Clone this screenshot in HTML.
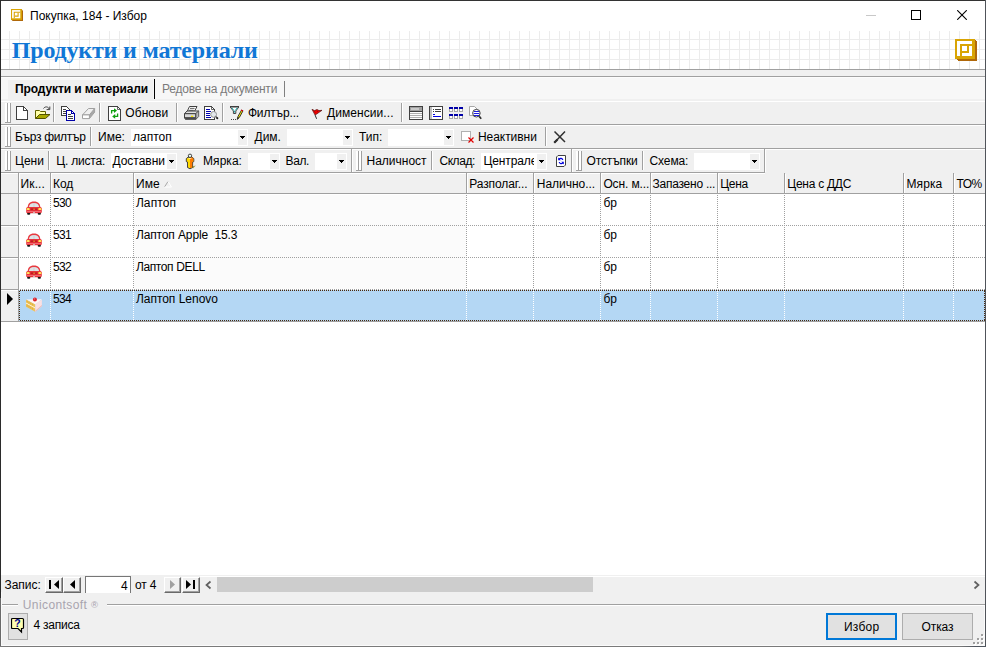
<!DOCTYPE html>
<html>
<head>
<meta charset="utf-8">
<style>
*{box-sizing:border-box;margin:0;padding:0}
html,body{width:986px;height:647px;overflow:hidden;background:#f0f0f0}
body{font-family:"Liberation Sans",sans-serif;font-size:12px;color:#000;position:relative}
.a{position:absolute}
.t{position:absolute;white-space:nowrap;line-height:14px;height:14px}
.hl{position:absolute;height:1px;left:1px;right:1px}
.vl{position:absolute;width:1px}
.sep{position:absolute;width:2px;background:linear-gradient(90deg,#a0a0a0 50%,#fff 50%)}
.grip{position:absolute;left:5px;width:6px;height:20px;background:linear-gradient(90deg,#fff 0,#fff 2px,#a0a0a0 2px,#a0a0a0 3px,#fff 3px,#fff 5px,#a0a0a0 5px,#a0a0a0 6px);border-bottom:1px solid #a0a0a0}
.box{position:absolute;background:#fff;height:17px}
.arr{position:absolute;width:0;height:0;border-left:3px solid transparent;border-right:3px solid transparent;border-top:3px solid #000}
.hc{position:absolute;top:173px;height:20px;border-left:1px solid #a0a0a0}
.vd{position:absolute;top:193px;height:128px;width:1px;background-image:linear-gradient(#a0a0a0 50%,transparent 50%);background-size:1px 2px}
.hd{position:absolute;left:18px;right:1px;height:1px;background-image:linear-gradient(90deg,#a0a0a0 50%,transparent 50%);background-size:2px 1px}
</style>
</head>
<body>
<!-- window frame -->
<!-- title bar -->
<div class="a" id="titlebar" style="left:1px;top:1px;width:984px;height:30px;background:#fff"></div>
<!-- header band -->
<div class="a" id="band" style="left:1px;top:31px;width:984px;height:38px;background-color:#fff;background-image:linear-gradient(90deg,#ececec 1px,transparent 1px),linear-gradient(#ececec 1px,transparent 1px);background-size:10px 10px;background-position:8px 8px"></div>

<!-- title icon -->
<svg class="a" style="left:11px;top:9px" width="12" height="12" viewBox="0 0 22 22">
<path d="M0 0H19L22 3V22H3L0 19Z" fill="#b0680a"/>
<rect x="0" y="0" width="20" height="20" fill="#d9a404"/>
<rect x="2" y="2" width="15" height="15" fill="#fff"/>
<path d="M5 5H17V7H7V17H5Z" fill="#d9a404"/>
<path d="M12 7H14V14H7V12H12Z" fill="#d9a404"/>
</svg>
<div class="t" id="title" style="left:30px;top:9px">Покупка, 184 - Избор</div>
<!-- window controls -->
<div class="a" style="left:866px;top:15px;width:10px;height:1px;background:#c8c8c8"></div>
<div class="a" style="left:911px;top:10px;width:10px;height:10px;border:1px solid #000"></div>
<svg class="a" style="left:957px;top:10px" width="10" height="10" viewBox="0 0 10 10"><path d="M0.2 0.2L9.8 9.8M9.8 0.2L0.2 9.8" stroke="#000" stroke-width="1.1" fill="none"/></svg>
<!-- heading -->
<div class="a" id="heading" style="left:11.8px;top:35px;font-family:'Liberation Serif',serif;font-weight:bold;font-size:24px;letter-spacing:-0.18px;line-height:30px;color:#1077d6;white-space:nowrap">Продукти и материали</div>
<!-- logo -->
<svg class="a" style="left:955px;top:39px" width="22" height="22" viewBox="0 0 22 22" shape-rendering="crispEdges">
<path d="M0 0H19L22 3V22H3L0 19Z" fill="#b0680a"/>
<rect x="0" y="0" width="20" height="20" fill="#d9a404"/>
<rect x="2" y="2" width="15" height="15" fill="#fff"/>
<path d="M5 5H17V7H7V17H5Z" fill="#d9a404"/>
<path d="M12 7H14V14H7V12H12Z" fill="#d9a404"/>
</svg>
<!-- lines under band -->
<div class="hl" style="top:69px;background:#a0a0a0"></div>
<div class="hl" style="top:76px;background:#a0a0a0"></div>
<!-- tab strip -->
<div class="a" style="left:1px;top:77px;width:984px;height:22px;background:#f7f7f7"></div>
<div class="a" style="left:8px;top:80px;width:145px;height:19px;background:#f0f0f0"></div>
<div class="hl" style="top:77px;background:#fcfcfc"></div>
<div class="t" id="tab1" style="left:15px;top:82px;font-weight:bold;letter-spacing:-0.11px">Продукти и материали</div>
<div class="a" style="left:154px;top:79px;width:1px;height:20px;background:#000"></div>
<div class="t" id="tab2" style="left:162px;top:82px;color:#7a7a7a;letter-spacing:-0.21px">Редове на документи</div>
<div class="a" style="left:284px;top:81px;width:1px;height:16px;background:#808080"></div>
<div class="hl" style="top:101px;background:#fff"></div>

<!-- toolbar 1 -->
<div class="grip" style="top:103px"></div>
<!-- new -->
<svg class="a" style="left:16px;top:106px" width="12" height="14" viewBox="0 0 12 14" shape-rendering="crispEdges">
<path d="M0.5 0.5H7.5L11.5 4.5V13.5H0.5Z" fill="#fff" stroke="#404040"/>
<path d="M7.5 0.5V4.5H11.5" fill="none" stroke="#404040"/>
</svg>
<!-- open -->
<svg class="a" style="left:35px;top:105px" width="16" height="15" viewBox="0 0 16 15">
<path d="M0.5 13.5V5.5H4.5L5.5 6.5H10.5V9" fill="#ffffa8" stroke="#606000" stroke-width="1"/>
<path d="M0.5 13.5L4.5 9.5H15L10.5 13.5Z" fill="#a8a800" stroke="#505000" stroke-width="1"/>
<path d="M8.5 3.5C10 1.3 13 1.3 14.3 4" fill="none" stroke="#404040" stroke-width="1"/>
<path d="M14.8 1.5V4.6H11.6" fill="none" stroke="#404040" stroke-width="1"/>
</svg>
<div class="sep" style="left:53px;top:103px;height:19px"></div>
<!-- copy -->
<svg class="a" style="left:61px;top:106px" width="15" height="15" viewBox="0 0 15 15" shape-rendering="crispEdges">
<path d="M0.5 0.5H5.5L8.5 3.5V9.5H0.5Z" fill="#fff" stroke="#404040"/>
<path d="M2 3.5H5M2 5.5H7M2 7.5H7" stroke="#404040"/>
<path d="M5.5 4.5H10.5L13.5 7.5V14.5H5.5Z" fill="#fff" stroke="#0000a8"/>
<path d="M10.5 4.5V7.5H13.5" fill="none" stroke="#0000a8"/>
<path d="M7 8.5H10M7 10.5H12M7 12.5H12" stroke="#404040"/>
</svg>
<!-- eraser (disabled) -->
<svg class="a" style="left:82px;top:108px" width="14" height="12" viewBox="0 0 14 12">
<path d="M7.4 6.9L12.6 0.5V4.2L7.4 10.6Z" fill="#a8a8a8" stroke="#a0a0a0" stroke-width="1"/>
<path d="M0.5 6.9L6.5 0.5H12.6L7.4 6.9Z" fill="#f0f0f0" stroke="#a0a0a0" stroke-width="1"/>
<path d="M0.5 6.9H7.4V10.6H0.5Z" fill="#fff" stroke="#a0a0a0" stroke-width="1"/>
</svg>
<div class="sep" style="left:99px;top:103px;height:19px"></div>
<!-- refresh -->
<svg class="a" style="left:108px;top:106px" width="13" height="15" viewBox="0 0 13 15">
<path d="M0.5 0.5H9.5L12.5 3.5V14.5H0.5Z" fill="#fff" stroke="#404040" shape-rendering="crispEdges"/>
<path d="M9.5 0.5V3.5H12.5" fill="none" stroke="#404040" stroke-width="0.8"/>
<path d="M3.6 7.6V4.6H6.5" fill="none" stroke="#10a010" stroke-width="1.3"/>
<path d="M6 2.2L9 4.6L6 7Z" fill="#10a010"/>
<path d="M9.6 7.4V10.4H6.7" fill="none" stroke="#10a010" stroke-width="1.3"/>
<path d="M7.2 8L4.2 10.4L7.2 12.8Z" fill="#10a010"/>
</svg>
<div class="t" id="b_obn" style="left:125.3px;top:106px;letter-spacing:0.07px">Обнови</div>
<div class="sep" style="left:176px;top:103px;height:19px"></div>
<!-- print -->
<svg class="a" style="left:184px;top:106px" width="16" height="14" viewBox="0 0 16 14">
<path d="M3.3 5.2L5.5 0.5H13L10.6 5.2Z" fill="#fff" stroke="#404040"/>
<path d="M6 2.4H10.6M5.2 4.3H9.6" stroke="#505050" stroke-width="0.9"/>
<path d="M0.5 7.7L3 5H14.6L12 7.7Z" fill="#e0e0e0" stroke="#404040"/>
<path d="M11.7 7.7L14.7 4.8V10.5L11.7 13.5Z" fill="#b8b8b8" stroke="#505050" stroke-width="0.9"/>
<path d="M0.5 7.7H11.7V12.3H0.5Z" fill="#d8d8d8" stroke="#404040"/>
<path d="M1.5 12.5H11.7V13.6H1.5Z" fill="#e8e8e8" stroke="#404040" stroke-width="0.9"/>
<path d="M1 11.6H11.4" stroke="#404040" stroke-width="0.9"/>
<rect x="7" y="9.7" width="2.2" height="1.3" fill="#f0e000"/>
</svg>
<!-- preview -->
<svg class="a" style="left:204px;top:106px" width="15" height="15" viewBox="0 0 15 15">
<path d="M0.5 0.5H7.5L10.5 3.5V13.5H0.5Z" fill="#fff" stroke="#404040" shape-rendering="crispEdges"/>
<path d="M7.5 0.5V3.5H10.5" fill="none" stroke="#404040" stroke-width="0.8"/>
<path d="M2 3.5H6M2 5.5H7M2 7.5H6M2 9.5H6M2 11.5H7" stroke="#0000b0" shape-rendering="crispEdges"/>
<circle cx="9.6" cy="8.4" r="2.9" fill="#e4e8ec" stroke="#909090"/>
<path d="M11.6 10.4L13.4 12.2" stroke="#505050" stroke-width="1.4"/>
<circle cx="13.3" cy="12.2" r="1" fill="#202020"/>
</svg>
<div class="sep" style="left:222px;top:103px;height:19px"></div>
<!-- filter -->
<svg class="a" style="left:229px;top:105px" width="16" height="16" viewBox="0 0 16 16">
<path d="M1 1.5H10" stroke="#404040" stroke-width="1"/>
<path d="M1.2 2L4.4 6V8.5H6.8V6L9.8 2Z" fill="#fff" stroke="#404040" stroke-width="1"/>
<path d="M2.8 2.8L5 5.6M8.2 2.8L6.2 5.6M5.5 6V7.6" stroke="#20b0b0" stroke-width="1" fill="none"/>
<path d="M8.2 14.4L9 11.4L12.6 5L14 5.8L10.4 12.4Z" fill="#fff000" stroke="#202020" stroke-width="0.9"/>
<path d="M12.4 4.4L14.2 5.4L13.6 6.4L11.8 5.4Z" fill="#e00010"/>
<path d="M8.2 14.6L8.9 12L10.2 12.8Z" fill="#202020"/>
<path d="M2 14.5H3M4 14.5H5M6 14.5H7" stroke="#404040" shape-rendering="crispEdges"/>
</svg>
<div class="t" id="b_fil" style="left:247.9px;top:106px;letter-spacing:-0.15px">Филтър...</div>
<!-- flag -->
<svg class="a" style="left:311px;top:108px" width="13" height="12" viewBox="0 0 13 12">
<path d="M1 1.3L3.5 2.6L6 1.5L8 2.6L11 2.3L4.1 7.1Z" fill="#f00000" stroke="#501010" stroke-width="0.7"/>
<path d="M4.1 7.1L5.6 10.8" fill="none" stroke="#303030" stroke-width="1"/>
<path d="M3.4 3.4L4.4 4.4M6 3L6.8 4" stroke="#800000" stroke-width="0.6"/>
</svg>
<div class="t" id="b_dim" style="left:327.0px;top:106px;letter-spacing:0.07px">Дименсии...</div>
<div class="sep" style="left:401px;top:103px;height:19px"></div>
<!-- view icons -->
<svg class="a" style="left:409px;top:106px" width="14" height="14" viewBox="0 0 14 14" shape-rendering="crispEdges">
<rect x="0.5" y="0.5" width="13" height="13" fill="#fff" stroke="#404040"/>
<rect x="1" y="1" width="12" height="4" fill="#a0a0a0"/>
<rect x="2" y="2" width="8" height="2" fill="#c8c8c8"/>
<path d="M0 5.5H14" stroke="#404040"/>
<path d="M1 7.5H13M1 9.5H13M1 11.5H13" stroke="#b0b0b0"/>
</svg>
<svg class="a" style="left:429px;top:106px" width="14" height="14" viewBox="0 0 14 14" shape-rendering="crispEdges">
<rect x="0.5" y="0.5" width="13" height="13" fill="#fff" stroke="#404040"/>
<rect x="1" y="1" width="2" height="12" fill="#c0c0c0"/>
<path d="M4 3.5H5M6 3.5H12M4 5.5H5M6 5.5H12" stroke="#404040"/>
<path d="M4 8.5H6M4 10.5H12" stroke="#0000e0"/>
</svg>
<svg class="a" style="left:449px;top:107px" width="14" height="12" viewBox="0 0 14 12" shape-rendering="crispEdges">
<g fill="#fff" stroke="#a8a8a8"><rect x="0.5" y="0.5" width="3" height="4"/><rect x="5.5" y="0.5" width="3" height="4"/><rect x="10.5" y="0.5" width="3" height="4"/><rect x="0.5" y="7.5" width="3" height="4"/><rect x="5.5" y="7.5" width="3" height="4"/><rect x="10.5" y="7.5" width="3" height="4"/></g>
<g fill="#0000a8"><rect x="0" y="0" width="4" height="2"/><rect x="5" y="0" width="4" height="2"/><rect x="10" y="0" width="4" height="2"/><rect x="0" y="7" width="4" height="2"/><rect x="5" y="7" width="4" height="2"/><rect x="10" y="7" width="4" height="2"/></g>
</svg>
<svg class="a" style="left:469px;top:106px" width="14" height="15" viewBox="0 0 14 15">
<path d="M0.5 0.5H5.5L8 3V9.5H0.5Z" fill="#fff" stroke="#a8a8a8"/>
<circle cx="7.4" cy="7.2" r="3.8" fill="#fff" stroke="#404040"/>
<path d="M5 5.5H10M4.6 7.5H10.4M5 9.5H10" stroke="#0000e0" stroke-width="0.9"/>
<path d="M10.2 10.4L12.2 12.8" stroke="#303030" stroke-width="1.7"/>
</svg>
<div class="hl" style="top:124px;background:#a0a0a0"></div>
<div class="hl" style="top:125px;background:#fff"></div>

<!-- toolbar 2 -->
<div class="grip" style="top:127px"></div>
<div class="a" style="left:131px;top:129px;width:117px;height:17px;background:#fff"></div><div class="a" style="left:238px;top:130px;width:9px;height:15px;background:#f0f0f0"></div><svg class="a" style="left:240px;top:136px" width="5" height="3" viewBox="0 0 5 3" shape-rendering="crispEdges"><path d="M0 0H5V1H0ZM1 1H4V2H1ZM2 2H3V3H2Z" fill="#000"/></svg>
<div class="a" style="left:287px;top:129px;width:66px;height:17px;background:#fff"></div><div class="a" style="left:343px;top:130px;width:9px;height:15px;background:#f0f0f0"></div><svg class="a" style="left:345px;top:136px" width="5" height="3" viewBox="0 0 5 3" shape-rendering="crispEdges"><path d="M0 0H5V1H0ZM1 1H4V2H1ZM2 2H3V3H2Z" fill="#000"/></svg>
<div class="a" style="left:388px;top:129px;width:66px;height:17px;background:#fff"></div><div class="a" style="left:444px;top:130px;width:9px;height:15px;background:#f0f0f0"></div><svg class="a" style="left:446px;top:136px" width="5" height="3" viewBox="0 0 5 3" shape-rendering="crispEdges"><path d="M0 0H5V1H0ZM1 1H4V2H1ZM2 2H3V3H2Z" fill="#000"/></svg>
<div class="t" id="l_bf" style="left:14.9px;top:130px;letter-spacing:-0.3px">Бърз филтър</div>
<div class="sep" style="left:90px;top:127px;height:19px"></div>
<div class="t" id="l_ime" style="left:98px;top:130px">Име:</div>
<div class="t" id="v_lap" style="left:133px;top:130px">лаптоп</div>
<div class="t" id="l_dim" style="left:254.5px;top:130px">Дим.</div>
<div class="t" id="l_tip" style="left:359.1px;top:130px;letter-spacing:-0.04px">Тип:</div>
<!-- inactive checkbox icon -->
<svg class="a" style="left:461px;top:131px" width="14" height="13" viewBox="0 0 14 13">
<rect x="0.5" y="0.5" width="9" height="9" fill="#fff" stroke="#b0b0b0" shape-rendering="crispEdges"/>
<path d="M7.5 6.5L12.5 11.5M12.5 6.5L7.5 11.5" stroke="#e00000" stroke-width="1.2" fill="none"/>
</svg>
<div class="t" id="l_neak" style="left:477.9px;top:130px;letter-spacing:-0.04px">Неактивни</div>
<div class="sep" style="left:545px;top:127px;height:19px"></div>
<svg class="a" style="left:553px;top:130px" width="14" height="14" viewBox="0 0 14 14">
<path d="M1.5 1.5L12 12M12 1.5L1.5 12.5" stroke="#303030" stroke-width="1.5" fill="none"/>
<path d="M1.2 12.8L4.5 9.5" stroke="#303030" stroke-width="2.2"/>
</svg>
<div class="hl" style="top:148px;background:#a0a0a0"></div>
<div class="hl" style="top:149px;background:#fff"></div>
<!-- toolbar 3 -->
<div class="grip" style="top:151px"></div>
<div class="a" style="left:111px;top:153px;width:66px;height:17px;background:#fff"></div><div class="a" style="left:167px;top:154px;width:9px;height:15px;background:#f0f0f0"></div><svg class="a" style="left:169px;top:160px" width="5" height="3" viewBox="0 0 5 3" shape-rendering="crispEdges"><path d="M0 0H5V1H0ZM1 1H4V2H1ZM2 2H3V3H2Z" fill="#000"/></svg>
<div class="a" style="left:248px;top:153px;width:32px;height:17px;background:#fff"></div><div class="a" style="left:270px;top:154px;width:9px;height:15px;background:#f0f0f0"></div><svg class="a" style="left:272px;top:160px" width="5" height="3" viewBox="0 0 5 3" shape-rendering="crispEdges"><path d="M0 0H5V1H0ZM1 1H4V2H1ZM2 2H3V3H2Z" fill="#000"/></svg>
<div class="a" style="left:315px;top:153px;width:32px;height:17px;background:#fff"></div><div class="a" style="left:337px;top:154px;width:9px;height:15px;background:#f0f0f0"></div><svg class="a" style="left:339px;top:160px" width="5" height="3" viewBox="0 0 5 3" shape-rendering="crispEdges"><path d="M0 0H5V1H0ZM1 1H4V2H1ZM2 2H3V3H2Z" fill="#000"/></svg>
<div class="a" style="left:481px;top:153px;width:66px;height:17px;background:#fff"></div><div class="a" style="left:537px;top:154px;width:9px;height:15px;background:#f0f0f0"></div><svg class="a" style="left:539px;top:160px" width="5" height="3" viewBox="0 0 5 3" shape-rendering="crispEdges"><path d="M0 0H5V1H0ZM1 1H4V2H1ZM2 2H3V3H2Z" fill="#000"/></svg>
<div class="a" style="left:694px;top:153px;width:66px;height:17px;background:#fff"></div><div class="a" style="left:750px;top:154px;width:9px;height:15px;background:#f0f0f0"></div><svg class="a" style="left:752px;top:160px" width="5" height="3" viewBox="0 0 5 3" shape-rendering="crispEdges"><path d="M0 0H5V1H0ZM1 1H4V2H1ZM2 2H3V3H2Z" fill="#000"/></svg>
<div class="t" id="l_ceni" style="left:15px;top:154px">Цени</div>
<div class="sep" style="left:48px;top:151px;height:19px"></div>
<div class="t" id="l_cl" style="left:56.2px;top:154px;letter-spacing:-0.18px">Ц. листа:</div>
<div class="t" id="v_dost" style="left:112.4px;top:154px;letter-spacing:0.0px">Доставни</div>
<!-- person icon -->
<svg class="a" style="left:185px;top:153px" width="12" height="17" viewBox="0 0 12 17">
<path d="M7 13.6L10.8 12.6L8 15.6Z" fill="#a0a048"/>
<path d="M1.3 5.6L3 4.2H7L8.8 5.6V8.6L7.6 9V14.5L5 15.8L2.5 14.5V9L1.3 8.6Z" fill="#ffd800" stroke="#303038" stroke-width="0.9"/>
<path d="M5 4.2H7L8.4 5.7V8.4L7.2 8.8V14.3L5 15.3Z" fill="#ff7a00"/>
<path d="M3.6 5.2H6.4V5.9H3.6Z" fill="#fff8d0"/>
<circle cx="5" cy="2.8" r="1.7" fill="#f0fff0" stroke="#303038" stroke-width="0.9"/>
</svg>
<div class="t" id="l_mqr" style="left:203.1px;top:154px;letter-spacing:0.03px">Мярка:</div>
<div class="t" id="l_val" style="left:285.6px;top:154px;letter-spacing:-0.41px">Вал.</div>
<div class="a" style="left:351px;top:149px;width:1px;height:23px;background:#a0a0a0"></div>
<div class="a" style="left:352px;top:149px;width:1px;height:23px;background:#fff"></div>
<div class="grip" style="top:151px;left:356px"></div>
<div class="t" id="l_nal" style="left:366.5px;top:154px">Наличност</div>
<div class="sep" style="left:431px;top:151px;height:19px"></div>
<div class="t" id="l_skl" style="left:439.4px;top:154px;letter-spacing:-0.41px">Склад:</div>
<div class="t" id="v_cen" style="left:483.4px;letter-spacing:-0.1px;top:154px;width:51px;overflow:hidden">Централен</div>
<!-- refresh small -->
<svg class="a" style="left:556px;top:155px" width="10" height="12" viewBox="0 0 10 12">
<path d="M0.5 2L2 0.5H9.5V10L8 11.5H0.5Z" fill="#fff" stroke="#404040"/>
<path d="M6.8 5A2 2 0 0 0 3.2 4.2" fill="none" stroke="#0000e0" stroke-width="1.2"/>
<path d="M2.2 2.6V5.2H4.8Z" fill="#0000e0"/>
<path d="M3.2 7A2 2 0 0 0 6.8 7.8" fill="none" stroke="#0000e0" stroke-width="1.2"/>
<path d="M7.8 9.4V6.8H5.2Z" fill="#0000e0"/>
</svg>
<div class="a" style="left:571px;top:149px;width:1px;height:23px;background:#a0a0a0"></div>
<div class="a" style="left:572px;top:149px;width:1px;height:23px;background:#fff"></div>
<div class="grip" style="top:151px;left:576px"></div>
<div class="t" id="l_ots" style="left:586.6px;top:154px;letter-spacing:-0.14px">Отстъпки</div>
<div class="sep" style="left:642px;top:151px;height:19px"></div>
<div class="t" id="l_sch" style="left:649.6px;top:154px;letter-spacing:-0.14px">Схема:</div>
<div class="a" style="left:764px;top:149px;width:1px;height:23px;background:#a0a0a0"></div>
<div class="a" style="left:765px;top:149px;width:1px;height:23px;background:#fff"></div>
<div class="a" style="left:1px;top:172px;width:764px;height:1px;background:#a0a0a0"></div>
<div class="a" style="left:1px;top:173px;width:764px;height:1px;background:#fff"></div>
<!-- grid -->
<div class="a" style="left:1px;top:174px;width:984px;height:402px;background:#fff"></div>
<div class="a" style="left:1px;top:174px;width:984px;height:19px;background:#f0f0f0"></div>
<div class="a" style="left:1px;top:194px;width:17px;height:127px;background:#f0f0f0"></div>
<div class="a" style="left:134px;top:195px;width:332px;height:94px;background:#fbfbfb"></div>
<div class="a" style="left:19px;top:290px;width:966px;height:31px;background:#b4d7f4"></div>
<div class="hl" style="top:193px;background:#a0a0a0"></div>
<div class="a" style="left:18px;top:173px;width:1px;height:149px;background:#a0a0a0"></div>
<div class="a" style="left:1px;top:225px;width:17px;height:1px;background:#a0a0a0"></div>
<div class="a" style="left:1px;top:226px;width:17px;height:1px;background:#fff"></div>
<div class="a" style="left:1px;top:257px;width:17px;height:1px;background:#a0a0a0"></div>
<div class="a" style="left:1px;top:258px;width:17px;height:1px;background:#fff"></div>
<div class="a" style="left:1px;top:289px;width:17px;height:1px;background:#a0a0a0"></div>
<div class="a" style="left:1px;top:290px;width:17px;height:1px;background:#fff"></div>
<div class="a" style="left:1px;top:321px;width:17px;height:1px;background:#a0a0a0"></div>
<div class="a" style="left:50px;top:173px;width:1px;height:20px;background:#a0a0a0"></div>
<div class="a" style="left:51px;top:174px;width:1px;height:19px;background:#fff"></div>
<div class="a" style="left:133px;top:173px;width:1px;height:20px;background:#a0a0a0"></div>
<div class="a" style="left:134px;top:174px;width:1px;height:19px;background:#fff"></div>
<div class="a" style="left:466px;top:173px;width:1px;height:20px;background:#a0a0a0"></div>
<div class="a" style="left:467px;top:174px;width:1px;height:19px;background:#fff"></div>
<div class="a" style="left:533px;top:173px;width:1px;height:20px;background:#a0a0a0"></div>
<div class="a" style="left:534px;top:174px;width:1px;height:19px;background:#fff"></div>
<div class="a" style="left:600px;top:173px;width:1px;height:20px;background:#a0a0a0"></div>
<div class="a" style="left:601px;top:174px;width:1px;height:19px;background:#fff"></div>
<div class="a" style="left:650px;top:173px;width:1px;height:20px;background:#a0a0a0"></div>
<div class="a" style="left:651px;top:174px;width:1px;height:19px;background:#fff"></div>
<div class="a" style="left:717px;top:173px;width:1px;height:20px;background:#a0a0a0"></div>
<div class="a" style="left:718px;top:174px;width:1px;height:19px;background:#fff"></div>
<div class="a" style="left:784px;top:173px;width:1px;height:20px;background:#a0a0a0"></div>
<div class="a" style="left:785px;top:174px;width:1px;height:19px;background:#fff"></div>
<div class="a" style="left:903px;top:173px;width:1px;height:20px;background:#a0a0a0"></div>
<div class="a" style="left:904px;top:174px;width:1px;height:19px;background:#fff"></div>
<div class="a" style="left:953px;top:173px;width:1px;height:20px;background:#a0a0a0"></div>
<div class="a" style="left:954px;top:174px;width:1px;height:19px;background:#fff"></div>
<div class="a" style="left:19px;top:174px;width:1px;height:19px;background:#fff"></div>
<div class="t" id="h0" style="left:20.6px;top:177px;letter-spacing:0.08px">Ик...</div>
<div class="t" id="h1" style="left:53.1px;top:177px;letter-spacing:-0.07px">Код</div>
<div class="t" id="h2" style="left:136.1px;top:177px;letter-spacing:0.01px">Име</div>
<div class="t" id="h3" style="left:469.2px;top:177px;letter-spacing:-0.08px">Разполаг...</div>
<div class="t" id="h4" style="left:536.8px;top:177px;letter-spacing:-0.03px">Налично...</div>
<div class="t" id="h5" style="left:603.4px;top:177px;letter-spacing:-0.11px">Осн. м...</div>
<div class="t" id="h6" style="left:652.6px;top:177px;letter-spacing:-0.26px">Запазено ...</div>
<div class="t" id="h7" style="left:720.3px;top:177px;letter-spacing:-0.32px">Цена</div>
<div class="t" id="h8" style="left:787.3px;top:177px;letter-spacing:-0.27px">Цена с ДДС</div>
<div class="t" id="h9" style="left:906.5px;top:177px;letter-spacing:0.09px">Мярка</div>
<div class="t" id="h10" style="left:956.6px;top:177px;letter-spacing:-0.63px">ТО%</div>
<svg class="a" style="left:164px;top:181px" width="9" height="7" viewBox="0 0 9 7"><path d="M0.5 6L4 0.5" stroke="#a8a8a8" fill="none"/><path d="M4 0.5L7.5 6H0.5" stroke="#fff" fill="none"/></svg>
<div class="hd" style="top:225px"></div>
<div class="hd" style="top:257px"></div>
<div class="hd" style="top:289px"></div>
<div class="a" style="left:19px;top:321px;width:966px;height:1px;background:#a0a0a0"></div>
<div class="vd" style="left:50px;height:96px"></div>
<div class="vd" style="left:50px;top:291px;height:30px;background-image:linear-gradient(#fff 50%,transparent 50%)"></div>
<div class="vd" style="left:133px;height:96px"></div>
<div class="vd" style="left:133px;top:291px;height:30px;background-image:linear-gradient(#fff 50%,transparent 50%)"></div>
<div class="vd" style="left:466px;height:96px"></div>
<div class="vd" style="left:466px;top:291px;height:30px;background-image:linear-gradient(#fff 50%,transparent 50%)"></div>
<div class="vd" style="left:533px;height:96px"></div>
<div class="vd" style="left:533px;top:291px;height:30px;background-image:linear-gradient(#fff 50%,transparent 50%)"></div>
<div class="vd" style="left:600px;height:96px"></div>
<div class="vd" style="left:600px;top:291px;height:30px;background-image:linear-gradient(#fff 50%,transparent 50%)"></div>
<div class="vd" style="left:650px;height:96px"></div>
<div class="vd" style="left:650px;top:291px;height:30px;background-image:linear-gradient(#fff 50%,transparent 50%)"></div>
<div class="vd" style="left:717px;height:96px"></div>
<div class="vd" style="left:717px;top:291px;height:30px;background-image:linear-gradient(#fff 50%,transparent 50%)"></div>
<div class="vd" style="left:784px;height:96px"></div>
<div class="vd" style="left:784px;top:291px;height:30px;background-image:linear-gradient(#fff 50%,transparent 50%)"></div>
<div class="vd" style="left:903px;height:96px"></div>
<div class="vd" style="left:903px;top:291px;height:30px;background-image:linear-gradient(#fff 50%,transparent 50%)"></div>
<div class="vd" style="left:953px;height:96px"></div>
<div class="vd" style="left:953px;top:291px;height:30px;background-image:linear-gradient(#fff 50%,transparent 50%)"></div>
<div class="a" style="left:19px;top:290px;width:966px;height:31px;background:linear-gradient(90deg,#4a280b 50%,transparent 50%) 1px 0/2px 1px repeat-x,linear-gradient(90deg,#4a280b 50%,transparent 50%) 1px 30px/2px 1px repeat-x,linear-gradient(#4a280b 50%,transparent 50%) 0 1px/1px 2px repeat-y,linear-gradient(#4a280b 50%,transparent 50%) 965px 1px/1px 2px repeat-y"></div>
<div class="t" id="c0" style="left:53.1px;top:196px;letter-spacing:-0.75px">530</div>
<div class="t" id="n0" style="left:135.9px;top:196px;white-space:pre;letter-spacing:0.1px">Лаптоп</div>
<div class="t" style="left:603.5px;top:196px">бр</div>
<svg class="a" style="left:26px;top:201px" width="16" height="14" viewBox="0 0 16 14">
<path d="M1.6 7C1.8 3 3.5 0.6 8 0.6S14.2 3 14.4 7Z" fill="#e83a40"/>
<path d="M2.9 6C3.3 3.6 4.8 2 8 2S12.7 3.6 13.1 6Z" fill="#dfe3e6"/>
<path d="M7.6 2V6H8.4V2Z" fill="#c8ccd0"/>
<rect x="0.2" y="6" width="15.6" height="6.3" rx="1.6" fill="#e8343c"/>
<rect x="4.6" y="7.4" width="6.8" height="1.8" fill="#c01820"/>
<rect x="0.5" y="7" width="3.3" height="2.1" rx="0.9" fill="#ffd030"/>
<rect x="12.2" y="7" width="3.3" height="2.1" rx="0.9" fill="#ffd030"/>
<rect x="1.3" y="7.4" width="1.6" height="1.2" rx="0.5" fill="#fff8c0"/>
<rect x="13.1" y="7.4" width="1.6" height="1.2" rx="0.5" fill="#fff8c0"/>
<rect x="7.6" y="7.6" width="0.9" height="1.3" fill="#ffe040"/>
<rect x="1" y="10" width="14" height="0.9" fill="#f47078"/>
<path d="M1.2 12H4.2V13.2Q2.7 14.4 1.2 13.2Z" fill="#181818"/>
<path d="M11.8 12H14.8V13.2Q13.3 14.4 11.8 13.2Z" fill="#181818"/>
<rect x="7.2" y="11" width="1.6" height="2" rx="0.6" fill="#d8dcdc"/>
</svg>
<div class="t" id="c1" style="left:53.1px;top:228px;letter-spacing:-0.75px">531</div>
<div class="t" id="n1" style="left:135.9px;top:228px;white-space:pre;letter-spacing:-0.12px">Лаптоп Apple  15.3</div>
<div class="t" style="left:603.5px;top:228px">бр</div>
<svg class="a" style="left:26px;top:233px" width="16" height="14" viewBox="0 0 16 14">
<path d="M1.6 7C1.8 3 3.5 0.6 8 0.6S14.2 3 14.4 7Z" fill="#e83a40"/>
<path d="M2.9 6C3.3 3.6 4.8 2 8 2S12.7 3.6 13.1 6Z" fill="#dfe3e6"/>
<path d="M7.6 2V6H8.4V2Z" fill="#c8ccd0"/>
<rect x="0.2" y="6" width="15.6" height="6.3" rx="1.6" fill="#e8343c"/>
<rect x="4.6" y="7.4" width="6.8" height="1.8" fill="#c01820"/>
<rect x="0.5" y="7" width="3.3" height="2.1" rx="0.9" fill="#ffd030"/>
<rect x="12.2" y="7" width="3.3" height="2.1" rx="0.9" fill="#ffd030"/>
<rect x="1.3" y="7.4" width="1.6" height="1.2" rx="0.5" fill="#fff8c0"/>
<rect x="13.1" y="7.4" width="1.6" height="1.2" rx="0.5" fill="#fff8c0"/>
<rect x="7.6" y="7.6" width="0.9" height="1.3" fill="#ffe040"/>
<rect x="1" y="10" width="14" height="0.9" fill="#f47078"/>
<path d="M1.2 12H4.2V13.2Q2.7 14.4 1.2 13.2Z" fill="#181818"/>
<path d="M11.8 12H14.8V13.2Q13.3 14.4 11.8 13.2Z" fill="#181818"/>
<rect x="7.2" y="11" width="1.6" height="2" rx="0.6" fill="#d8dcdc"/>
</svg>
<div class="t" id="c2" style="left:53.1px;top:260px;letter-spacing:-0.75px">532</div>
<div class="t" id="n2" style="left:135.9px;top:260px;white-space:pre;letter-spacing:-0.37px">Лаптоп DELL</div>
<div class="t" style="left:603.5px;top:260px">бр</div>
<svg class="a" style="left:26px;top:265px" width="16" height="14" viewBox="0 0 16 14">
<path d="M1.6 7C1.8 3 3.5 0.6 8 0.6S14.2 3 14.4 7Z" fill="#e83a40"/>
<path d="M2.9 6C3.3 3.6 4.8 2 8 2S12.7 3.6 13.1 6Z" fill="#dfe3e6"/>
<path d="M7.6 2V6H8.4V2Z" fill="#c8ccd0"/>
<rect x="0.2" y="6" width="15.6" height="6.3" rx="1.6" fill="#e8343c"/>
<rect x="4.6" y="7.4" width="6.8" height="1.8" fill="#c01820"/>
<rect x="0.5" y="7" width="3.3" height="2.1" rx="0.9" fill="#ffd030"/>
<rect x="12.2" y="7" width="3.3" height="2.1" rx="0.9" fill="#ffd030"/>
<rect x="1.3" y="7.4" width="1.6" height="1.2" rx="0.5" fill="#fff8c0"/>
<rect x="13.1" y="7.4" width="1.6" height="1.2" rx="0.5" fill="#fff8c0"/>
<rect x="7.6" y="7.6" width="0.9" height="1.3" fill="#ffe040"/>
<rect x="1" y="10" width="14" height="0.9" fill="#f47078"/>
<path d="M1.2 12H4.2V13.2Q2.7 14.4 1.2 13.2Z" fill="#181818"/>
<path d="M11.8 12H14.8V13.2Q13.3 14.4 11.8 13.2Z" fill="#181818"/>
<rect x="7.2" y="11" width="1.6" height="2" rx="0.6" fill="#d8dcdc"/>
</svg>
<div class="t" id="c3" style="left:53.1px;top:292px;letter-spacing:-0.75px">534</div>
<div class="t" id="n3" style="left:135.9px;top:292px;white-space:pre;letter-spacing:-0.02px">Лаптоп Lenovo</div>
<div class="t" style="left:603.5px;top:292px">бр</div>
<svg class="a" style="left:26px;top:296px" width="16" height="16" viewBox="0 0 16 16">
<path d="M0 3.5L15.9 3.2L9.3 8.5Z" fill="#fff4f4"/>
<path d="M0 3.6L9.2 8.4V15.8L0 10.8Z" fill="#efc458"/>
<path d="M0 6.6L9.2 11.4V12.4L0 7.6Z" fill="#fff6e0"/>
<path d="M1.2 4.8V6.6M3 5.7V7.6M4.8 6.6V8.6M6.6 7.6V9.5M1.2 8.6V10.6M3 9.6V11.6M4.8 10.6V12.6M6.6 11.6V13.6" stroke="#d9a83c" stroke-width="0.8"/>
<path d="M9.3 8.3L15.9 3.4V10L9.3 15.9Z" fill="#fbe0e2"/>
<path d="M9.3 15.9L15.9 10V9L9.3 14.8Z" fill="#e8b8b8"/>
<circle cx="8.9" cy="3.5" r="2" fill="#d82028"/>
<circle cx="8.5" cy="2.9" r="0.8" fill="#f06068"/>
</svg>
<svg class="a" style="left:7px;top:293px" width="6" height="12" viewBox="0 0 6 12"><polygon points="0,0 6,6 0,12" fill="#000"/></svg>
<!-- record navigator -->
<div class="a" style="left:1px;top:575px;width:984px;height:71px;background:#f0f0f0"></div>
<div class="a" style="left:200px;top:576px;width:785px;height:1px;background:#fff"></div>
<div class="t" id="l_zap" style="left:4.5px;top:578px;letter-spacing:-0.04px">Запис:</div>
<style>
.nb{position:absolute;top:577px;width:18px;height:16px;background:#f0f0f0;border-top:1px solid #fff;border-left:1px solid #fff;border-right:1px solid #696969;border-bottom:1px solid #696969;box-shadow:inset -1px -1px 0 #a0a0a0}
.tr{position:absolute;width:0;height:0;border-top:4.5px solid transparent;border-bottom:4.5px solid transparent}
</style>
<div class="nb" style="left:45px"></div>
<div class="a" style="left:49px;top:580px;width:2px;height:9px;background:#000"></div>
<svg class="a" style="left:54px;top:580px" width="5" height="9" viewBox="0 0 5 9"><polygon points="5,0 5,9 0,4.5" fill="#000"/></svg>
<div class="nb" style="left:63px"></div>
<svg class="a" style="left:70px;top:580px" width="5" height="9" viewBox="0 0 5 9"><polygon points="5,0 5,9 0,4.5" fill="#000"/></svg>
<div class="a" style="left:85px;top:576px;width:46px;height:17px;background:#fff;border-top:1px solid #767676;border-left:1px solid #767676;border-right:1px solid #767676"></div>
<div class="t" id="v_rec" style="left:121px;top:579px">4</div>
<div class="t" id="l_ot" style="left:135.0px;top:578px;letter-spacing:-0.18px">от 4</div>
<div class="nb" style="left:164px;width:17px"></div>
<svg class="a" style="left:170px;top:580px" width="5" height="9" viewBox="0 0 5 9"><polygon points="0,0 0,9 5,4.5" fill="#a0a0a0"/></svg>
<div class="nb" style="left:182px"></div>
<svg class="a" style="left:186px;top:580px" width="5" height="9" viewBox="0 0 5 9"><polygon points="0,0 0,9 5,4.5" fill="#000"/></svg>
<div class="a" style="left:193px;top:580px;width:2px;height:9px;background:#000"></div>
<svg class="a" style="left:204px;top:580px" width="9" height="10" viewBox="0 0 9 10"><path d="M6.5 1.5L2.5 5L6.5 8.5" stroke="#606060" stroke-width="1.7" fill="none"/></svg>
<div class="a" style="left:217px;top:577px;width:376px;height:15px;background:#cdcdcd"></div>
<svg class="a" style="left:972px;top:580px" width="9" height="10" viewBox="0 0 9 10"><path d="M2.5 1.5L6.5 5L2.5 8.5" stroke="#606060" stroke-width="1.7" fill="none"/></svg>
<!-- group line -->
<div class="a" style="left:1px;top:604px;width:984px;height:1px;background:#a0a0a0"></div>
<div class="a" style="left:1px;top:605px;width:984px;height:1px;background:#fff"></div>
<div class="a" style="left:18px;top:598px;width:89px;height:14px;background:#f0f0f0"></div>
<div class="t" id="l_uni" style="left:22.8px;top:598px;color:#a8a4ae;letter-spacing:0.4px">Unicontsoft <span style="font-size:9.5px;position:relative;top:-1.5px;letter-spacing:0">®</span></div>
<!-- help button -->
<div class="a" style="left:8px;top:613px;width:20px;height:27px;background:#e1e1e1;border:1px solid #adadad"></div>
<svg class="a" style="left:11px;top:617px" width="14" height="17" viewBox="0 0 14 17">
<path d="M1.5 1.5H11.5Q12.5 1.5 12.5 2.5V10.5Q12.5 11.5 11.5 11.5H10.5V15L7 11.5H1.5Q0.5 11.5 0.5 10.5V2.5Q0.5 1.5 1.5 1.5Z" fill="#ffffb0" stroke="#000" stroke-width="1.2"/>
<text x="6.5" y="10" font-family="Liberation Sans" font-weight="bold" font-size="10.5" text-anchor="middle" fill="#000090">?</text>
</svg>
<div class="t" id="l_cnt" style="left:33.5px;top:618px;letter-spacing:-0.22px">4 записа</div>
<!-- buttons -->
<div class="a" style="left:826px;top:613px;width:71px;height:27px;background:#e1e1e1;border:2px solid #0078d7"></div>
<div class="t" id="b_izb" style="left:844.0px;top:620px;letter-spacing:0.21px">Избор</div>
<div class="a" style="left:902px;top:613px;width:71px;height:27px;background:#e1e1e1;border:1px solid #adadad"></div>
<div class="t" id="b_otk" style="left:921.6px;top:620px;letter-spacing:-0.12px">Отказ</div>
<!-- size grip -->
<svg class="a" style="left:973px;top:634px" width="11" height="11" viewBox="0 0 11 11" shape-rendering="crispEdges">
<g fill="#fff"><rect x="9" y="1" width="2" height="2"/><rect x="5" y="5" width="2" height="2"/><rect x="9" y="5" width="2" height="2"/><rect x="1" y="9" width="2" height="2"/><rect x="5" y="9" width="2" height="2"/><rect x="9" y="9" width="2" height="2"/></g>
<g fill="#a0a0a0"><rect x="8" y="0" width="2" height="2"/><rect x="4" y="4" width="2" height="2"/><rect x="8" y="4" width="2" height="2"/><rect x="0" y="8" width="2" height="2"/><rect x="4" y="8" width="2" height="2"/><rect x="8" y="8" width="2" height="2"/></g>
</svg>
<div class="a" style="left:1px;top:645px;width:984px;height:1px;background:#fbfbfb"></div>
<div class="a" style="left:984px;top:606px;width:1px;height:40px;background:#fbfbfb"></div>
<div class="a" style="left:1px;top:592px;width:1px;height:54px;background:#fafafa"></div>
<div class="a" style="left:0;top:0;width:986px;height:1px;background:#333"></div>
<div class="a" style="left:0;top:0;width:1px;height:647px;background:linear-gradient(#2b2b2b 0,#2b2b2b 598px,#6a6a6a 598px)"></div>
<div class="a" style="left:985px;top:0;width:1px;height:647px;background:#50545a"></div>
<div class="a" style="left:0;top:646px;width:986px;height:1px;background:linear-gradient(90deg,#7a7a7a 0,#7a7a7a 960px,#50565f 975px)"></div>
</body>
</html>
